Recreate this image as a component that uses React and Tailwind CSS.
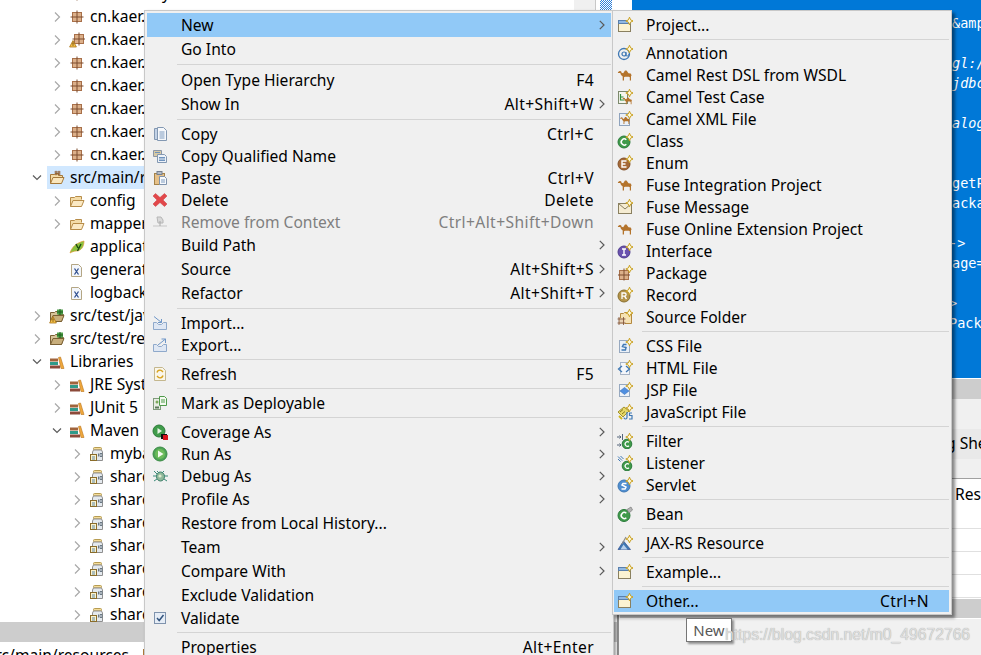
import React from "react";

const Svg = ({ children, className = "" }) => (
  <svg viewBox="0 0 16 16" width="16" height="16" className={`shrink-0 ${className}`} fill="none">{children}</svg>
);
const Star = () => <path d="M12.5.2l1.1 2.700 2.600 1.100-2.600 1.100-1.100 2.700-1.100-2.700L8.800 4l2.600-1.100z" fill="#fffbe2" stroke="#c9a020" strokeWidth="1" />;
const Camel = ({ s = 1 }) => (
  <path d="M.8 5.2 2.6 4l1.5.3.5 1.4 1.6.6L8 3.6h1.5l2 2.6 2.2.4.9 1.7-.6 1v4.2h-1.2v-3.2l-.9-.6H8l-1 .6v3.2H5.7V9.6L4 8 3.3 6H1.2z" fill="#b4742c" transform={`scale(${s})`} />
);
const Doc = ({ fill = "#eef3fa", stroke = "#8fa3bd" }) => <path d="M2.5 2.5h7l3 3v9h-10z" fill={fill} stroke={stroke} />;
const Warn = () => <g><path d="M4 8.5 7.4 15H.6z" fill="#f7c34a" stroke="#a8741a" strokeWidth=".8" /><path d="M4 10.5v2.2M4 13.4v.6" stroke="#5a3a08" /></g>;

const I = {
  pkg: () => <Svg><rect x="3.5" y="3.5" width="9" height="9" fill="#dcb08a" stroke="#a8704a" /><path d="M8 1.5v13M1.5 8h13" stroke="#7c4c2e" /></Svg>,
  pkgW: () => <Svg><rect x="5.5" y="2.5" width="9" height="9" fill="#dcb08a" stroke="#a8704a" /><path d="M10 .5v13M3.5 7h13" stroke="#7c4c2e" /><Warn /></Svg>,
  srcOpen: () => <Svg><path d="M1.5 13.5v-9h4l1-1h3v2h4v2" fill="#f4dca8" stroke="#a5793a" /><path d="M1.5 13.5 4 7.5h11l-2.5 6z" fill="#f9e6bd" stroke="#a5793a" /><path d="M7 .8v4.5M10 .8v4.5M5.5 2h6M5.5 4h6" stroke="#8a5a30" /></Svg>,
  folder: () => <Svg><path d="M1.5 13.5v-9h4l1-1h6v3" fill="#f4dca8" stroke="#b78c48" /><path d="M1.5 13.5 4 7.5h11l-2.5 6z" fill="#fbe9c4" stroke="#b78c48" /></Svg>,
  srcTest: ({ warn }) => <Svg><path d="M1.5 13.5v-9h4l1-1h3v3h5l-2 7z" fill="#d8c49a" stroke="#7a6034" /><path d="M1.5 13.5 4 7.5h11l-2.5 6z" fill="#c8ae7c" stroke="#7a6034" /><rect x="8" y="1.5" width="6" height="5" fill="#4fa04a" /><path d="M8 4h6M11 1v6" stroke="#1f5c1e" />{warn && <Warn />}</Svg>,
  yml: () => <Svg><path d="M1 14C3 8 7 4 15 2c0 6-3 10-8 10-2 0-4 1-6 2z" fill="#8ac23e" stroke="#e09a3a" strokeWidth=".7" /><path d="M7 5l2 4M12 5 8.5 12" stroke="#1e4a10" strokeWidth="1.4" /></Svg>,
  xml: () => <Svg><Doc fill="#f3f6fb" stroke="#b4a684" /><path d="M5.5 6.5l4 6M9.5 6.5l-4 6" stroke="#2f4f8f" strokeWidth="1.3" /></Svg>,
  lib: () => <Svg><rect x="1" y="4.5" width="8" height="3" fill="#a0643c" /><rect x="1" y="8" width="8" height="3" fill="#2f9a8a" /><rect x="1" y="11.5" width="10" height="3" fill="#8c4a3a" /><path d="M9.5 3.5 11.5 3l3.5 11.5h-3z" fill="#f0a83c" stroke="#b8741c" strokeWidth=".6" /></Svg>,
  jar: () => <Svg><rect x="4.5" y="1.5" width="8" height="2.5" rx="1" fill="#f5dc98" stroke="#b79c52" /><path d="M3.5 6l1-2h8l1 2v8.5h-10z" fill="#e4e9ee" stroke="#8f8f8f" /><rect x="1.5" y="8.5" width="6" height="6" fill="#fbf2cc" stroke="#8a6c2a" /><path d="M3 11h3M3 13h3" stroke="#5c88a8" /><path d="M9.5 7.5v3M11 7.5h2v3h-2z" stroke="#6a7884" /></Svg>,

  copy: () => <Svg><path d="M2.5 2.5h5v11h-5z" fill="#c3d2e6" stroke="#8398b2" /><path d="M5.5 1.5h6l3 3v10h-9z" fill="#f6f8fb" stroke="#8398b2" /><path d="M7.5 6h5M7.5 8h5M7.5 10h5M7.5 12h5" stroke="#7e9cc0" /></Svg>,
  copyQ: () => <Svg><path d="M1.5 2.5h8v6h-8z" fill="#d7c9a4" stroke="#8c97a8" /><path d="M5.5 6.5h7l2 2v6h-9z" fill="#eef2f8" stroke="#8398b2" /><path d="M7 9.5h6M7 11h6M7 12.5h6M3 4.500h5" stroke="#6f93bd" /></Svg>,
  paste: () => <Svg><rect x="2.500" y="3.500" width="10" height="11" fill="#e6c088" stroke="#a58248" /><rect x="5" y="1.500" width="5" height="3" fill="#b4bcc8" stroke="#76808e" /><path d="M7.500 6.500h5l2 2v6h-7z" fill="#f7f9fc" stroke="#7f93ad" /><path d="M9 10h4M9 12h4" stroke="#7e9cc0" /></Svg>,
  del: () => <Svg><path d="M3.500 1.500 8 5.500l4.500-4 2.500 2.500-4 4 4 4-2.500 2.500L8 10.500l-4.500 4L1 12l4-4-4-4z" fill="#e2474a" stroke="#c93a3d" strokeWidth=".5" /></Svg>,
  remove: () => <Svg><path d="M5 3h4l2 3v3H6z" fill="#d9d9d9" stroke="#b6b6b6" /><path d="M1 12h14" stroke="#c6c6c6" /><path d="M8 7v5" stroke="#a8a8a8" /></Svg>,
  imp: () => <Svg><path d="M1.500 7.500v7h13v-7h-3l-2 2h-3l-2-2z" fill="#dfe7f3" stroke="#8fa9cb" /><path d="M2 1.500 9.500 7.500M9.500 4v3.500H6" stroke="#6e96c8" /></Svg>,
  exp: () => <Svg><path d="M1.500 7.500v7h13v-7h-3l-2 2h-3l-2-2z" fill="#dfe7f3" stroke="#8fa9cb" /><path d="M6 8 13.500 2M9.500 2h4v4" stroke="#6e96c8" /></Svg>,
  refresh: () => <Svg><path d="M2.500 1.500h8l3 3v10h-11z" fill="#faf6ea" stroke="#c4b78e" /><path d="M5 6.500a3 3 0 0 1 5-1.500l1 1M11 9.500a3 3 0 0 1-5 1.500l-1-1" stroke="#d8a21e" strokeWidth="1.400" /></Svg>,
  deploy: () => <Svg><rect x="1.500" y="3.500" width="7" height="11" fill="#e8ede4" stroke="#7f9a7a" /><circle cx="5" cy="7" r="1.500" fill="#7caa5c" /><path d="M3 12.500h4" stroke="#5c7a5a" strokeWidth="2" /><path d="M7.500 1.500h5l2 2v7h-7z" fill="#f4faf0" stroke="#4f9a4a" /><path d="M9 5h4M9 7h4" stroke="#4f9a4a" /></Svg>,
  coverage: () => <Svg><circle cx="7" cy="7" r="6" fill="#3f9c4a" stroke="#2d7a38" /><path d="M5.500 4v6l4.500-3z" fill="#e8f6e4" /><rect x="9" y="10" width="6" height="5" fill="#111" /><rect x="11" y="11" width="5" height="5" fill="#d8141c" /></Svg>,
  run: () => <Svg><circle cx="8" cy="8" r="7" fill="#4ea456" stroke="#398a44" /><circle cx="8" cy="8" r="5" fill="#6cbb5a" /><path d="M6 4.500v7l5.500-3.500z" fill="#f4fbf0" /></Svg>,
  debug: () => <Svg><ellipse cx="8.500" cy="8.500" rx="4" ry="4.500" fill="#8fb89a" stroke="#3f7f6a" /><path d="M5 3l2 2M12 3l-2 2M1 8h4M12 8h4M2 13l3-2M15 13l-3-2M2 3l3 3" stroke="#3a8a78" /><circle cx="8" cy="8" r="1.600" fill="#e0ead0" /></Svg>,
  check: () => <Svg><rect x="2.500" y="2.500" width="11" height="11" fill="#e6edf6" stroke="#7f93ad" /><path d="M5 8l2.200 2.500L11.500 5" stroke="#33557f" strokeWidth="1.500" /></Svg>,

  project: () => <Svg><rect x="1.500" y="3.500" width="12" height="11" fill="#fbf3d2" stroke="#8a8060" /><rect x="1.500" y="3.500" width="12" height="3" fill="#8fb8e4" stroke="#5a80ac" /><Star /></Svg>,
  at: () => <Svg><circle cx="7" cy="9" r="5.500" stroke="#3f78b4" strokeWidth="1.300" /><circle cx="7" cy="9" r="2" stroke="#3f78b4" strokeWidth="1.200" /><path d="M9 7v3.500c1 1 3 .5 3-1.500" stroke="#3f78b4" /><Star /></Svg>,
  camel: () => <Svg><Camel /></Svg>,
  camelTest: () => <Svg><rect x="1.500" y="2.500" width="9" height="12" fill="#f5f5ee" stroke="#7d8a6d" /><path d="M3.500 5v6h4M3.500 8h3" stroke="#2f8f3a" strokeWidth="1.200" /><g transform="translate(5 6) scale(.68)"><Camel /></g><Star /></Svg>,
  camelXml: () => <Svg><rect x="2.500" y="2.500" width="10" height="12" fill="#eaf0f8" stroke="#8fa3bd" /><g transform="translate(2.500 3.500) scale(.7)"><Camel /></g><Star /></Svg>,
  cls: () => <Svg><circle cx="7" cy="9" r="6" fill="#3f9a4a" stroke="#2a7a3a" /><path d="M9.300 6.800a3 3 0 1 0 0 4.400" stroke="#fff" strokeWidth="1.500" /><Star /></Svg>,
  enum: () => <Svg><circle cx="7" cy="9" r="6" fill="#a66a38" stroke="#825028" /><path d="M9.500 6h-4.500v6h4.500M5 9h3.500" stroke="#fff" strokeWidth="1.400" /><Star /></Svg>,
  msg: () => <Svg><rect x="1.500" y="4.500" width="13" height="10" fill="#f5ecd2" stroke="#8a8060" /><path d="M1.500 4.500 8 10l6.500-5.500" stroke="#8a8060" /><Star /></Svg>,
  iface: () => <Svg><circle cx="7" cy="9" r="6" fill="#6a52ae" stroke="#4f3c8e" /><path d="M5 6h4M5 12h4M7 6v6" stroke="#fff" strokeWidth="1.400" /><Star /></Svg>,
  pkgN: () => <Svg><rect x="2.500" y="5.500" width="9" height="9" fill="#dcb08a" stroke="#a8704a" /><path d="M7 3.500v12M1 10h12" stroke="#7c4c2e" /><Star /></Svg>,
  rec: () => <Svg><circle cx="7" cy="9" r="6" fill="#b4944a" stroke="#8a7030" /><path d="M5 12V6h2.500a1.500 1.500 0 0 1 0 3.200H5M7.500 9.200 9.500 12" stroke="#fff" strokeWidth="1.300" /><Star /></Svg>,
  srcF: () => <Svg><path d="M3.500 9V4.500h3l1-1h4V5h3v9.500H8" fill="#f6e2b4" stroke="#b4893f" /><rect x="2" y="9" width="6" height="6" fill="#e8d2b4" /><path d="M.5 10h8M.5 14h8M2 8v8M6.500 8v8" stroke="#7c4c2e" strokeWidth=".8" /><Star /></Svg>,
  css: () => <Svg><rect x="2.500" y="2.500" width="10" height="12" fill="#eaf0f8" stroke="#97a9c0" /><path d="M9.500 6.500h-3l-1 2 3.500 1-.6 2.500H4.500" stroke="#3f78b4" strokeWidth="1.500" /><Star /></Svg>,
  html: () => <Svg><rect x="3.500" y="2.500" width="9" height="12" fill="#f4f6fa" stroke="#a9b5c6" /><path d="M5 6 1.500 9 5 12M9 6l3.500 3L9 12" stroke="#3f78b4" strokeWidth="1.300" /><Star /></Svg>,
  jsp: () => <Svg><rect x="2.500" y="2.500" width="10" height="12" fill="#eef3f9" stroke="#97a9c0" /><path d="M7.500 5.500 12 9l-4.500 3.500L3 9z" fill="#4f8fe0" stroke="#3a70bc" strokeWidth=".6" /><Star /></Svg>,
  js: () => <Svg><path d="M1 8l6-5 5 4-6 6z" fill="#e6d868" stroke="#a09230" /><path d="M3 8l3-2.500M5 10l3-2.500" stroke="#8a7c1c" /><path d="M10 8v5.500a1.500 1.500 0 0 1-3 0M15 9h-2.500v2.500H15V15h-3" stroke="#3f78b4" strokeWidth="1.200" /><path d="M2 12l3 3" stroke="#d0b820" strokeWidth="2" /><Star /></Svg>,
  filter: () => <Svg><circle cx="10" cy="11" r="4.800" fill="#3f9a4a" stroke="#2a7a3a" /><path d="M12 9.300a2.300 2.300 0 1 0 0 3.400" stroke="#fff" strokeWidth="1.200" /><path d="M0 4h4M2.500 2.500 4 4 2.500 5.500M5.500 1v6M0 12h4M2.500 10.500 4 12l-1.500 1.500" stroke="#54657a" /><Star /></Svg>,
  listener: () => <Svg><circle cx="10" cy="11" r="4.800" fill="#3f9a4a" stroke="#2a7a3a" /><path d="M12 9.300a2.300 2.300 0 1 0 0 3.400" stroke="#fff" strokeWidth="1.200" /><path d="M1 1.500l4 4M1 4l2.500 2.500M3.500 1l3 3" stroke="#3f78b4" /><Star /></Svg>,
  servlet: () => <Svg><circle cx="7" cy="9" r="6" fill="#4f8ed0" stroke="#3f78b4" /><path d="M9.500 6.500h-3.500L5 8l4 2-1 2H4.500" stroke="#fff" strokeWidth="1.500" /><Star /></Svg>,
  bean: () => <Svg><circle cx="7" cy="9.500" r="6" fill="#3f9a4a" stroke="#2a7a3a" /><path d="M9.300 7.300a3 3 0 1 0 0 4.400" stroke="#fff" strokeWidth="1.500" /><path d="M10 3.500 14 1l1.500 3-3.500 3z" fill="#b4b4b4" stroke="#7c7c7c" strokeWidth=".7" /></Svg>,
  jax: () => <Svg><path d="M1 14.500 6.500 6l7 8.500z" fill="#3f78b4" stroke="#2f4f8f" strokeWidth=".7" /><path d="M3.500 14.500 6.500 9.500l4 5z" fill="#b8d0ec" /><path d="M5 9 9 2" stroke="#8c8c8c" strokeWidth="1.200" /><Star /></Svg>,
};

const Chev = ({ open, className = "" }) =>
  open ? (
    <svg width="14" height="10" viewBox="0 0 14 10" className={className} fill="none"><path d="M3 2.500 7 6.500l4-4" stroke="#5c5c5c" strokeWidth="1.200" /></svg>
  ) : (
    <svg width="14" height="10" viewBox="0 0 14 10" className={className} fill="none"><path d="M5 .5 9.500 5 5 9.500" stroke="#a8a8a8" strokeWidth="1.200" /></svg>
  );

const tree = [
  { l: 1, c: "closed", i: "pkg", t: "cn.kaer.key", first: true },
  { l: 1, c: "closed", i: "pkg", t: "cn.kaer.app" },
  { l: 1, c: "closed", i: "pkgW", t: "cn.kaer.core" },
  { l: 1, c: "closed", i: "pkg", t: "cn.kaer.dao" },
  { l: 1, c: "closed", i: "pkg", t: "cn.kaer.entity" },
  { l: 1, c: "closed", i: "pkg", t: "cn.kaer.mapper" },
  { l: 1, c: "closed", i: "pkg", t: "cn.kaer.service" },
  { l: 1, c: "closed", i: "pkg", t: "cn.kaer.util" },
  { l: 0, c: "open", i: "srcOpen", t: "src/main/resources", sel: true },
  { l: 1, c: "closed", i: "folder", t: "config" },
  { l: 1, c: "closed", i: "folder", t: "mapper" },
  { l: 1, i: "yml", t: "application.yml" },
  { l: 1, i: "xml", t: "generatorConfig.xml" },
  { l: 1, i: "xml", t: "logback.xml" },
  { l: 0, c: "closed", i: "srcTestW", t: "src/test/java" },
  { l: 0, c: "closed", i: "srcTest", t: "src/test/resources" },
  { l: 0, c: "open", i: "lib", t: "Libraries" },
  { l: 1, c: "closed", i: "lib", t: "JRE System Library" },
  { l: 1, c: "closed", i: "lib", t: "JUnit 5" },
  { l: 1, c: "open", i: "lib", t: "Maven Dependencies" },
  { l: 2, c: "closed", i: "jar", t: "mybatis.jar" },
  ...Array.from({ length: 7 }, () => ({ l: 2, c: "closed", i: "jar", t: "sharding.jar" })),
];

function TreeRow({ r }) {
  const indent = r.l === 0 ? "w-[47px]" : r.l === 1 ? "w-[67px]" : "w-[87px]";
  let icon;
  if (r.i === "srcTestW") icon = <I.srcTest warn />;
  else if (r.i === "srcTest") icon = <I.srcTest />;
  else { const C = I[r.i]; icon = <C />; }
  return (
    <div className={`flex h-[23px] items-center overflow-hidden ${r.first ? "-mt-[18px]" : "w-[144px]"}`}>
      <div className={`flex shrink-0 justify-end pr-[3px] ${indent}`}>{r.c && <Chev open={r.c === "open"} />}</div>
      <div className={`flex h-[23px] flex-1 items-center pl-[2px] ${r.sel ? "bg-[#d1e8ff]" : ""}`}>
        {icon}
        <span className="ml-[5px] whitespace-nowrap">{r.t}</span>
      </div>
    </div>
  );
}

const main = [
  { t: "New", tall: 1, arrow: 1, active: 1 },
  { t: "Go Into", tall: 1 },
  "sep",
  { t: "Open Type Hierarchy", tall: 1, s: "F4" },
  { t: "Show In", tall: 1, s: "Alt+Shift+W", arrow: 1 },
  "sep",
  { t: "Copy", i: "copy", s: "Ctrl+C" },
  { t: "Copy Qualified Name", i: "copyQ" },
  { t: "Paste", i: "paste", s: "Ctrl+V" },
  { t: "Delete", i: "del", s: "Delete" },
  { t: "Remove from Context", i: "remove", s: "Ctrl+Alt+Shift+Down", off: 1 },
  { t: "Build Path", tall: 1, arrow: 1 },
  { t: "Source", tall: 1, s: "Alt+Shift+S", arrow: 1 },
  { t: "Refactor", tall: 1, s: "Alt+Shift+T", arrow: 1 },
  "sep",
  { t: "Import...", i: "imp" },
  { t: "Export...", i: "exp" },
  "sep",
  { t: "Refresh", i: "refresh", s: "F5" },
  "sep",
  { t: "Mark as Deployable", i: "deploy" },
  "sep",
  { t: "Coverage As", i: "coverage", arrow: 1 },
  { t: "Run As", i: "run", arrow: 1 },
  { t: "Debug As", i: "debug", arrow: 1 },
  { t: "Profile As", tall: 1, arrow: 1 },
  { t: "Restore from Local History...", tall: 1 },
  { t: "Team", tall: 1, arrow: 1 },
  { t: "Compare With", tall: 1, arrow: 1 },
  { t: "Exclude Validation", tall: 1 },
  { t: "Validate", i: "check" },
  "sep",
  { t: "Properties", s: "Alt+Enter" },
];

const sub = [
  { t: "Project...", i: "project" },
  "first",
  { t: "Annotation", i: "at" },
  { t: "Camel Rest DSL from WSDL", i: "camel" },
  { t: "Camel Test Case", i: "camelTest" },
  { t: "Camel XML File", i: "camelXml" },
  { t: "Class", i: "cls" },
  { t: "Enum", i: "enum" },
  { t: "Fuse Integration Project", i: "camel" },
  { t: "Fuse Message", i: "msg" },
  { t: "Fuse Online Extension Project", i: "camel" },
  { t: "Interface", i: "iface" },
  { t: "Package", i: "pkgN" },
  { t: "Record", i: "rec" },
  { t: "Source Folder", i: "srcF" },
  "sep",
  { t: "CSS File", i: "css" },
  { t: "HTML File", i: "html" },
  { t: "JSP File", i: "jsp" },
  { t: "JavaScript File", i: "js" },
  "sep",
  { t: "Filter", i: "filter" },
  { t: "Listener", i: "listener" },
  { t: "Servlet", i: "servlet" },
  "sep",
  { t: "Bean", i: "bean" },
  "sep",
  { t: "JAX-RS Resource", i: "jax" },
  "sep",
  { t: "Example...", i: "project" },
  "sep",
  { t: "Other...", i: "project", s: "Ctrl+N", active: 1 },
];

function MainRow({ r }) {
  const Ic = r.i && I[r.i];
  return (
    <div className={`flex items-center ${r.tall ? "h-[24px]" : "h-[22px]"} ${r.active ? "bg-[#91c9f7]" : ""} ${r.off ? "text-[#7f7f7f]" : "text-black"}`}>
      <div className="flex w-[34px] shrink-0 pl-[5px]">{Ic && <Ic />}</div>
      <span className="flex-1 whitespace-nowrap pt-[2px]">{r.t}</span>
      {r.s && <span className="whitespace-nowrap pt-[2px] tracking-[0.4px]">{r.s}</span>}
      <div className="flex w-[17px] shrink-0 justify-end pr-[6px]">
        {r.arrow && (
          <svg width="6" height="10" viewBox="0 0 6 10" fill="none"><path d="M.8.8 5 5 .8 9.200" stroke="#5a5a5a" strokeWidth="1.200" /></svg>
        )}
      </div>
    </div>
  );
}

function SubRow({ r }) {
  const Ic = I[r.i];
  return (
    <div className={`flex h-[22px] items-center ${r.active ? "bg-[#91c9f7]" : ""}`}>
      <div className="flex w-[32px] shrink-0 pl-[3px]"><Ic /></div>
      <span className="flex-1 whitespace-nowrap pt-[2px]">{r.t}</span>
      {r.s && <span className="mr-[20px] whitespace-nowrap pt-[2px] tracking-[0.4px]">{r.s}</span>}
    </div>
  );
}

const Sep = ({ pad, h }) => (
  <div className={`flex items-center ${h} ${pad}`}><div className="h-px w-full bg-[#d4d4d4]" /></div>
);

const code = [
  { t: "&amp", c: "pl-[3px]" },
  { t: "" },
  { t: "gl:/", c: "pl-[3px] italic" },
  { t: "jdbc", c: "pl-[3px] italic" },
  { t: "" },
  { t: "alog", c: "pl-[3px] italic" },
  { t: "" },
  { t: "" },
  { t: "getP", c: "pl-[3px]" },
  { t: "acka", c: "pl-[3px]" },
  { t: "" },
  { t: "->", c: "" },
  { t: "age=", c: "pl-[3px]" },
  { t: "" },
  { t: ">", c: "" },
  { t: "Pack", c: "" },
];

export default function App() {
  return (
    <div className="relative flex h-[655px] w-[981px] overflow-hidden bg-white font-['Noto_Sans','Liberation_Sans',sans-serif] text-[15.6px] text-black">
      {/* left pane */}
      <div className="flex w-[617px] shrink-0 flex-col">
        <div className="flex h-[622px] overflow-hidden">
          <div className="w-[574px] shrink-0">
            {tree.map((r, i) => <TreeRow key={i} r={r} />)}
          </div>
          <div className="w-[21px] shrink-0 bg-[#f0f0f0]" />
          <div className="w-[5px] shrink-0 border-l border-[#c8c8c8]" />
          <div className="w-[12px] shrink-0 bg-[repeating-conic-gradient(#2f7fd8_0_25%,#ffffff_0_50%)] bg-[length:2px_2px]" />
          <div className="w-[5px] shrink-0" />
        </div>
        <div className="h-[20px] shrink-0 bg-[#cdcdcd]" />
        <div className="flex flex-1 overflow-hidden">
          <div className="w-[143px] shrink-0">
            <span className="-ml-[12px] mt-[1px] block whitespace-nowrap leading-[24px]">src/main/resources</span>
          </div>
          <div className="mt-[7px] h-[6px] w-px bg-[#b07a3a]" />
        </div>
      </div>

      {/* right pane */}
      <div className="flex flex-1 flex-col">
        <div className="flex h-[378px] shrink-0">
          <div className="w-[15px] shrink-0" />
          <div className="flex-1 overflow-hidden bg-[#0078d7] pl-[317px] pt-[13px] font-['DejaVu_Sans_Mono',monospace] text-[13.5px] text-white">
            {code.map((l, i) => (
              <div key={i} className={`h-[20px] whitespace-pre leading-[20px] ${l.c || ""}`}>{l.t}</div>
            ))}
          </div>
        </div>
        <div className="h-px shrink-0 bg-white" />
        <div className="h-[20px] shrink-0 bg-[#cdcdcd]" />
        <div className="h-[30px] shrink-0 bg-[#f0f0f0]" />
        <div className="flex h-[30px] shrink-0 items-center whitespace-nowrap bg-[#e9e9e9] pl-[329px]">g She</div>
        <div className="h-[20px] shrink-0 border-b border-[#a0a0a0] bg-[#f0f0f0]" />
        <div className="h-[50px] shrink-0 border-b border-[#e0e0e0] pl-[338px] leading-[30px]">Res</div>
        <div className="h-[23px] shrink-0 border-b border-[#e0e0e0]" />
        <div className="h-[23px] shrink-0 border-b border-[#e0e0e0]" />
        <div className="h-[23px] shrink-0 border-b border-[#e0e0e0]" />
        <div className="flex flex-1 flex-col border-l-2 border-[#8f8f8f]">
          <div className="mt-[1px] ml-[1px] h-[19px] shrink-0 bg-[#cdcdcd]" />
          <div className="mt-[1px] flex-1 bg-[#f1f1f1]" />
        </div>
      </div>

      {/* context menu */}
      <div className="absolute left-[144px] top-[10px] w-[470px] border border-[#c8c8c8] bg-[#f0f0f0] px-[2px] pt-[2px] shadow-[2px_2px_3px_rgba(0,0,0,0.4)]">
        {main.map((r, i) =>
          r === "sep" ? <Sep key={i} pad="pl-[30px]" h="h-[7px]" /> : <MainRow key={i} r={r} />
        )}
      </div>

      {/* submenu */}
      <div className="absolute left-[612px] top-[10px] w-[340px] border border-[#c8c8c8] bg-[#f0f0f0] pb-[2px] pl-[1px] pr-[2px] pt-[3px] shadow-[3px_3px_3px_rgba(0,0,0,0.45)]">
        {sub.map((r, i) =>
          r === "sep" ? <Sep key={i} pad="pl-[28px]" h="h-[7px]" /> : r === "first" ? <Sep key={i} pad="pl-[28px]" h="h-[6px]" /> : <SubRow key={i} r={r} />
        )}
      </div>

      {/* tooltip */}
      <div className="absolute left-[686px] top-[618px] flex h-[24px] w-[46px] items-center justify-center border border-[#767676] bg-white text-[15px] text-[#575757] shadow-[2px_2px_2px_rgba(0,0,0,0.4)]">New</div>

      {/* watermark */}
      <div className="absolute left-[725px] top-[626px] whitespace-nowrap font-['Liberation_Sans',sans-serif] text-[15.7px] leading-[18px] text-[#dedede] [text-shadow:0_0_1px_#9a9a9a]">https://blog.csdn.net/m0_49672766</div>
    </div>
  );
}
